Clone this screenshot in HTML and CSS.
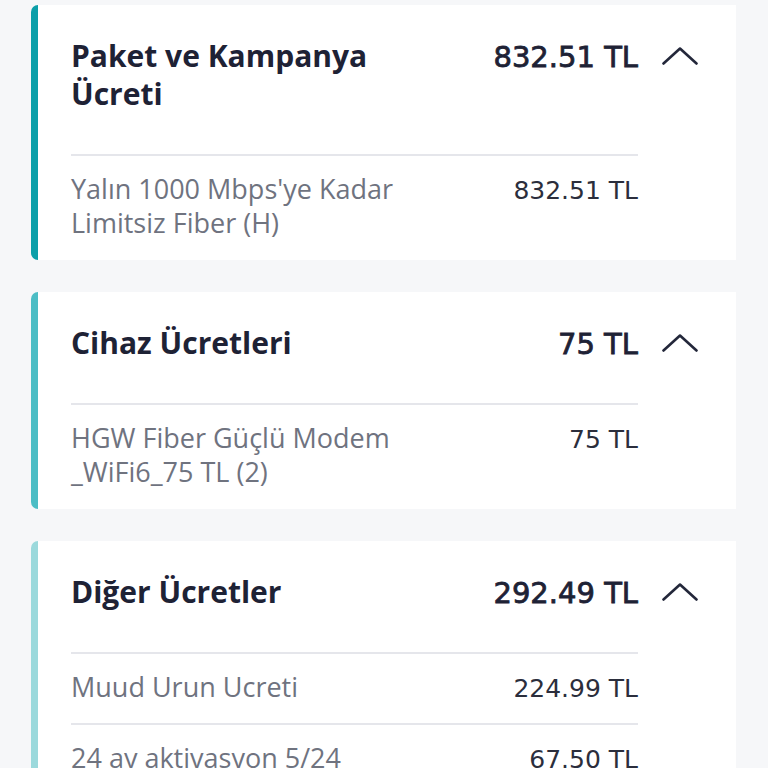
FILE: index.html
```html
<!DOCTYPE html>
<html lang="tr">
<head>
<meta charset="utf-8">
<link rel="stylesheet" href="styles.css">
</head>
<body>
<div class="page">
  <section class="card accent-1">
    <div class="card-head">
      <div class="head-title">Paket ve Kampanya Ücreti</div>
      <div class="head-amount">832.51 TL</div>
      <svg class="chev" viewBox="0 0 36 20" width="36" height="20"><path d="M1.5 16.5 L18 1.5 L34.5 16.5" fill="none" stroke="#23273a" stroke-width="2.6" stroke-linecap="round" stroke-linejoin="round"/></svg>
    </div>
    <div class="items">
      <div class="item">
        <div class="item-name">Yalın 1000 Mbps'ye Kadar Limitsiz Fiber (H)</div>
        <div class="item-amount">832.51 TL</div>
      </div>
    </div>
  </section>

  <section class="card accent-2">
    <div class="card-head">
      <div class="head-title">Cihaz Ücretleri</div>
      <div class="head-amount">75 TL</div>
      <svg class="chev" viewBox="0 0 36 20" width="36" height="20"><path d="M1.5 16.5 L18 1.5 L34.5 16.5" fill="none" stroke="#23273a" stroke-width="2.6" stroke-linecap="round" stroke-linejoin="round"/></svg>
    </div>
    <div class="items">
      <div class="item">
        <div class="item-name">HGW Fiber Güçlü Modem _WiFi6_75 TL (2)</div>
        <div class="item-amount">75 TL</div>
      </div>
    </div>
  </section>

  <section class="card accent-3">
    <div class="card-head">
      <div class="head-title">Diğer Ücretler</div>
      <div class="head-amount">292.49 TL</div>
      <svg class="chev" viewBox="0 0 36 20" width="36" height="20"><path d="M1.5 16.5 L18 1.5 L34.5 16.5" fill="none" stroke="#23273a" stroke-width="2.6" stroke-linecap="round" stroke-linejoin="round"/></svg>
    </div>
    <div class="items">
      <div class="item">
        <div class="item-name">Muud Urun Ucreti</div>
        <div class="item-amount">224.99 TL</div>
      </div>
      <div class="item">
        <div class="item-name">24 ay aktivasyon 5/24</div>
        <div class="item-amount">67.50 TL</div>
      </div>
    </div>
  </section>
</div>
</body>
</html>
```

FILE: styles.css
```css
html, body {
  margin: 0;
  padding: 0;
  background: #f6f7f9;
  font-family: "Open Sans", Lato, sans-serif;
  overflow: hidden;
}

.page {
  padding: 5px 32px 0 31px;
  display: flex;
  flex-direction: column;
  gap: 32px;
}

.card {
  background: #ffffff;
  border-left: 7px solid #0b9ea8;
  border-radius: 7px 0 0 7px;
  padding: 32px 38px 1px 33px;
}

.accent-1 { border-left-color: #0c9fa9; }
.accent-2 { border-left-color: #4cbdc5; }
.accent-3 { border-left-color: #9bd9dc; }

.card-head {
  display: flex;
  align-items: baseline;
  padding-bottom: 41px;
}

.head-title {
  flex: 1;
  font-size: 30px;
  line-height: 38px;
  font-weight: 700;
  color: #1e2235;
  max-width: 335px;
}

.head-amount {
  margin-left: auto;
  font-family: "DejaVu Sans", sans-serif;
  font-size: 29px;
  line-height: 34px;
  font-weight: 400;
  -webkit-text-stroke: 0.8px #1e2235;
  color: #1e2235;
  white-space: nowrap;
}

.chev {
  flex: none;
  align-self: flex-start;
  margin-left: 24px;
  margin-top: 10px;
}

.items {
  margin-right: 60px;
}

.item {
  display: flex;
  align-items: baseline;
  justify-content: space-between;
  border-top: 2px solid #e5e6eb;
  padding: 16px 0 19px;
}

.item-name {
  font-size: 27px;
  line-height: 34px;
  color: #6f737f;
  max-width: 345px;
}

.item-amount {
  font-family: "DejaVu Sans", sans-serif;
  font-size: 25px;
  line-height: 30px;
  color: #2b2e3c;
  white-space: nowrap;
}
```
